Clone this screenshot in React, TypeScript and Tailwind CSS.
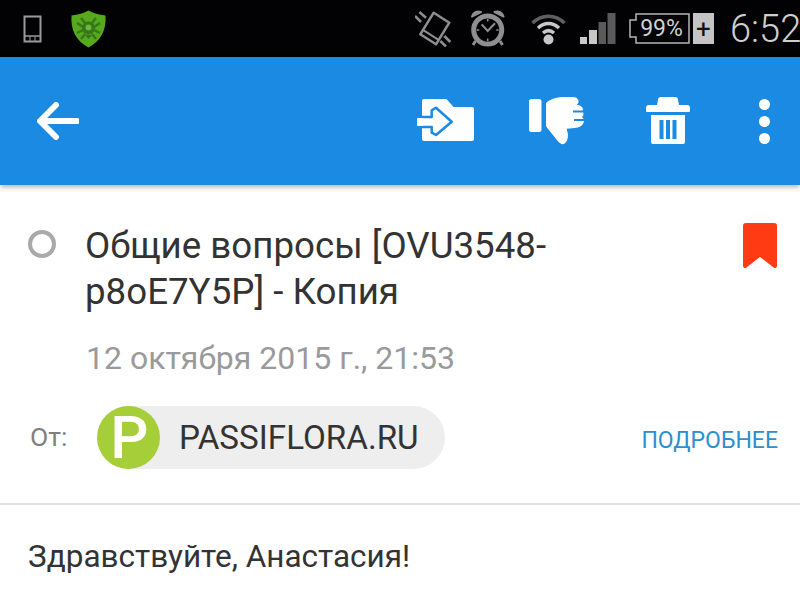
import { ReactNode } from "react";

function Icon({ w, h, className, children }: { w: number; h: number; className?: string; children: ReactNode }) {
  return (
    <svg width={w} height={h} viewBox={`0 0 ${w} ${h}`} className={`shrink-0 ${className ?? ""}`}>
      {children}
    </svg>
  );
}

function StatusBar() {
  return (
    <div className="flex h-[57px] items-center overflow-hidden bg-[#020204] pl-[23px]">
      {/* screenshot device icon */}
      <Icon w={20} h={28} className="mt-[1px]">
        <path d="M1.500 1.500h16v25h-16z" fill="none" stroke="#9a9a9a" strokeWidth="2" />
        <path d="M2 21h15" stroke="#9a9a9a" strokeWidth="1.500" />
        <path d="M7 21v5M12 21v5" stroke="#9a9a9a" strokeWidth="1" />
      </Icon>
      {/* antivirus shield */}
      <Icon w={37} h={38} className="ml-[27px]">
        <path d="M18.500 0.500 C23 3 29 5 35.500 5.500 C36.500 20 31 31 18.500 37.500 C6 31 0.500 20 1.500 5.500 C8 5 14 3 18.500 0.500Z" fill="#56a81c" />
        <path d="M11 8 15 13M26 8l-4 5M7 13l6 4M30 13l-6 4M7 23l6-3M30 23l-6-3M11 29l4-5M26 29l-4-5" stroke="#34761a" strokeWidth="2.200" />
        <circle cx="18.500" cy="18" r="6.500" fill="#34761a" />
        <circle cx="18.500" cy="17.500" r="3" fill="#6fb53a" />
        <path d="M15 25h7l-3.500 4Z" fill="#34761a" />
      </Icon>
      {/* vibrate */}
      <Icon w={38} h={36} className="ml-[308px]">
        <path d="M18.700 1.700 34.300 11.700 21 33.300 5.300 23.300Z" fill="none" stroke="#8e8e8e" strokeWidth="2.500" strokeLinejoin="round" />
        <path d="M8.700 19.300 24.300 29.300" stroke="#8e8e8e" strokeWidth="2" />
        <path d="M0 5l6 6M4.300 1 11 6.700M29.300 25l6 6M25.300 30l5.700 5.500" stroke="#8e8e8e" strokeWidth="2.500" />
      </Icon>
      {/* alarm */}
      <Icon w={36} h={37} className="ml-[17px]">
        <circle cx="17.700" cy="20" r="14" fill="none" stroke="#8e8e8e" strokeWidth="5" />
        <path d="M2 6.500C3 2.500 7 0.500 11 2ZM33.500 6.500C32.500 2.500 28.500 0.500 24.500 2Z" fill="#8e8e8e" stroke="#8e8e8e" strokeWidth="2" strokeLinejoin="round" />
        <path d="M5.500 31 3 35M30 31l2.500 4" stroke="#8e8e8e" strokeWidth="3" />
        <path d="M11.700 14.300 17.700 21 25 13.300" fill="none" stroke="#8e8e8e" strokeWidth="2" />
        <path d="M17.700 9v2.500M17.700 28.500V31M6.700 20h2.500M26.200 20h2.500" stroke="#8e8e8e" strokeWidth="1.500" />
      </Icon>
      {/* wifi */}
      <Icon w={35} h={32} className="ml-[25px]">
        <path d="M1.500 10C11 1 24 1 33.500 10" fill="none" stroke="#5f5f5f" strokeWidth="3.500" />
        <path d="M7 15C13.500 9 21.500 9 28 15" fill="none" stroke="#c8c8c8" strokeWidth="3.500" />
        <path d="M12 20C15.500 17 19.500 17 23 20" fill="none" stroke="#c8c8c8" strokeWidth="3.500" />
        <circle cx="17.500" cy="26.500" r="5" fill="#c8c8c8" />
      </Icon>
      {/* signal */}
      <Icon w={36} h={31} className="ml-[14px]">
        <path d="M0 24h7v7H0z" fill="#c8c8c8" />
        <path d="M9 17h8v14H9z" fill="#c8c8c8" />
        <path d="M18.500 9h7.500v22h-7.500z" fill="#5a5a5a" />
        <path d="M27.500 0h8v31h-8z" fill="#5a5a5a" />
      </Icon>
      {/* battery */}
      <div className="relative ml-[13px] flex h-[31px] w-[61px] shrink-0 items-center justify-center pl-[4px] text-[23px] leading-none font-['Roboto',sans-serif] text-[#d0d0d0]">
        <svg width="61" height="31" viewBox="0 0 61 31" className="absolute top-0 left-0">
          <path d="M7 7V1h53v29H7v-6H1V7Z" fill="none" stroke="#b5b5b5" strokeWidth="1.500" />
        </svg>
        99%
      </div>
      <div className="ml-[3px] flex h-[31px] w-[21px] shrink-0 items-center justify-center bg-[#c4c4c4] text-[26px] leading-none font-['Roboto',sans-serif] text-[#111]">
        +
      </div>
      <span className="ml-[16px] text-[38px] leading-none font-light whitespace-nowrap font-['Roboto',sans-serif] text-[#cfcfcf]">
        6:52
      </span>
    </div>
  );
}

function Toolbar() {
  return (
    <div className="relative z-10 flex h-[128px] items-center bg-[#1a8ae2] pl-[37px] shadow-[0_2px_5px_rgba(0,0,0,0.3)]">
      <Icon w={42} h={38}>
        <path d="M40 19H4M19 3 3 19l16 16" fill="none" stroke="#fff" strokeWidth="6" strokeLinecap="round" strokeLinejoin="round" />
      </Icon>
      {/* move to folder */}
      <Icon w={58} h={44} className="ml-[338px]">
        <path d="M5 2a2 2 0 0 1 2-2H29.500L36.500 8H55a2 2 0 0 1 2 2V40a2 2 0 0 1-2 2H7a2 2 0 0 1-2-2Z" fill="#fff" />
        <path d="M0 18H14.700V11.300L19 8.700 34.700 22.700 19 36 14.700 33.700V28H0Z" fill="#fff" stroke="#1a8ae2" strokeWidth="2.500" strokeLinejoin="round" />
        <path d="M0 19.200H6V26.800H0Z" fill="#fff" />
      </Icon>
      {/* spam */}
      <Icon w={56} h={50} className="ml-[54px]">
        <rect x="0" y="3" width="12.500" height="33" rx="2.500" fill="#fff" />
        <path d="M17 7C20 4 26 1.500 33 1L44.300 1C48 1 50.500 4 49.300 7L47.700 8.700C52 9 55 12 53.700 15 55 18 54.500 20 53 21 56 23 55.500 28 52 30 50 31.500 46 32.300 37.700 32.700 38.500 36 39.500 39 38.700 42 38 46 35 49 32.700 48 30.500 47.500 29 45 27.700 43.700L17.700 31.300C17 30 17 29 17 27Z" fill="#fff" />
        <path d="M44 15.500H54.500M45 24H55.500" stroke="#1a8ae2" strokeWidth="2.200" />
      </Icon>
      {/* delete */}
      <Icon w={44} h={48} className="ml-[61px]">
        <path d="M15 0h14a3 3 0 0 1 3 3l1 5h8a3 3 0 0 1 3 3v3a1 1 0 0 1-1 1H1a1 1 0 0 1-1-1v-3a3 3 0 0 1 3-3h8l1-5a3 3 0 0 1 3-3Z" fill="#fff" />
        <path d="M5 18h34v27a2 2 0 0 1-2 2H7a2 2 0 0 1-2-2Z" fill="#fff" />
        <path d="M13.500 23h4v19h-4zM20 23h4v19h-4zM26.500 23h4v19h-4z" fill="#1a8ae2" />
      </Icon>
      {/* overflow */}
      <div className="ml-[69px] flex h-[45px] flex-col justify-between">
        <div className="h-[11px] w-[11px] rounded-full bg-white" />
        <div className="h-[11px] w-[11px] rounded-full bg-white" />
        <div className="h-[11px] w-[11px] rounded-full bg-white" />
      </div>
    </div>
  );
}

export default function App() {
  return (
    <div className="h-[601px] w-[800px] overflow-hidden bg-white font-['Roboto',sans-serif]">
      <StatusBar />
      <Toolbar />

      <div className="flex items-start pt-[38px] pl-[28px]">
        <div className="mt-[7px] h-[28px] w-[28px] shrink-0 rounded-full border-[4px] border-[#a9a9a9]" />
        <div className="ml-[29px] w-[500px] text-[36.700px] leading-[46px] text-[#333]">
          Общие вопросы [OVU3548-
          <br />
          p8oE7Y5P] - Копия
        </div>
        <Icon w={36} h={46} className="ml-[157px]">
          <path d="M4 0h28a3 3 0 0 1 3 3v40a2 2 0 0 1-3.300 1.500L18 34 4.300 44.500A2 2 0 0 1 1 43V3a3 3 0 0 1 3-3Z" fill="#ff3b14" />
        </Icon>
      </div>

      <div className="mt-[20px] pl-[86px] text-[32px] leading-[46px] text-[#9a9a9a]">12 октября 2015 г., 21:53</div>

      <div className="mt-[25px] flex items-center pr-[22px] pl-[30px]">
        <span className="mb-[2px] w-[67px] text-[26.500px] text-[#808080]">От:</span>
        <div className="flex h-[63px] w-[348px] items-center rounded-full bg-[#eeeeee]">
          <div className="flex h-[63px] w-[63px] shrink-0 items-center justify-center rounded-full bg-[#a6ce39] pl-[2px] text-[60px] leading-none font-medium text-white">
            P
          </div>
          <span className="ml-[19px] text-[33.200px] text-[#333]">PASSIFLORA.RU</span>
        </div>
        <span className="mt-[8px] ml-auto text-[23px] text-[#2b8fd0]">ПОДРОБНЕЕ</span>
      </div>

      <div className="mt-[34px] h-[2px] bg-[#e2e2e2]" />

      <div className="pt-[32px] pl-[28px] text-[31.500px] leading-[40px] text-[#333]">Здравствуйте, Анастасия!</div>
    </div>
  );
}
